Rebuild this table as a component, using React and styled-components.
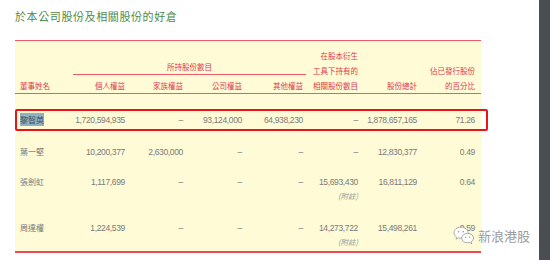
import React from "react";
import styled, { createGlobalStyle, css } from "styled-components";

const COLS = "45px 60px 58px 59px 61px 55px 59px 58px";
const CJK = `"Noto Sans CJK TC", "Noto Sans CJK SC", sans-serif`;
const NUM = `"Liberation Sans", Arial, sans-serif`;

const rows = [
  { name: "黎智英", marked: true, values: ["1,720,594,935", "–", "93,124,000", "64,938,230", "–", "1,878,657,165", "71.26"] },
  { name: "葉一堅", top: 14, values: ["10,200,377", "2,630,000", "–", "–", "–", "12,830,377", "0.49"] },
  { name: "張劍虹", top: 16, note: true, values: ["1,117,699", "–", "–", "–", "15,693,430", "16,811,129", "0.64"] },
  { name: "周達權", top: 18, note: true, values: ["1,224,539", "–", "–", "–", "14,273,722", "15,498,261", "0.59"] },
];

function WeChatIcon() {
  return (
    <svg width="22" height="19" viewBox="0 0 22 19">
      <path
        d="M8 1.2C3.9 1.2 1 3.8 1 6.8c0 1.8 1 3.3 2.5 4.3L3 13.2l2.5-1.3c.8.2 1.6.4 2.5.4 4.1 0 7-2.5 7-5.5S12.1 1.2 8 1.2z"
        fill="#fff"
        stroke="#a8a8a8"
        strokeWidth="1"
      />
      <circle cx="5.6" cy="5.6" r="0.9" fill="#a8a8a8" />
      <circle cx="10.2" cy="5.6" r="0.9" fill="#a8a8a8" />
      <path
        d="M14.6 7.4c-3.4 0-5.9 2.1-5.9 4.7s2.5 4.7 5.9 4.7c.7 0 1.4-.1 2-.3l2.1 1.1-.5-1.8c1.4-.9 2.3-2.2 2.3-3.7 0-2.6-2.5-4.7-5.9-4.7z"
        fill="#fff"
        stroke="#a8a8a8"
        strokeWidth="1"
      />
      <circle cx="12.6" cy="11.2" r="0.8" fill="#a8a8a8" />
      <circle cx="16.6" cy="11.2" r="0.8" fill="#a8a8a8" />
    </svg>
  );
}

export default function App() {
  return (
    <Page>
      <GlobalStyle />
      <Content>
        <Title>於本公司股份及相關股份的好倉</Title>
        <Panel>
          <HeadGrid>
            <HeadCell $col="1" $row="3" $left>董事姓名</HeadCell>
            <GroupCell>所持股份數目</GroupCell>
            <HeadCell $col="2" $row="3">個人權益</HeadCell>
            <HeadCell $col="3" $row="3">家族權益</HeadCell>
            <HeadCell $col="4" $row="3">公司權益</HeadCell>
            <HeadCell $col="5" $row="3">其他權益</HeadCell>
            <HeadCell $col="6" $row="1 / 4">
              在股本衍生
              <br />
              工具下持有的
              <br />
              相關股份數目
            </HeadCell>
            <HeadCell $col="7" $row="3">股份總計</HeadCell>
            <HeadCell $col="8" $row="2 / 4">
              佔已發行股份
              <br />
              的百分比
            </HeadCell>
          </HeadGrid>

          <Body>
            {rows.map((r) => (
              <Row key={r.name} $marked={r.marked} $top={r.top || 0}>
                <Name>{r.marked ? <Selected>{r.name}</Selected> : r.name}</Name>
                {r.values.map((v, i) => (
                  <Num key={i}>
                    {v}
                    {r.note && i === 4 && <Note>(附註)</Note>}
                  </Num>
                ))}
              </Row>
            ))}
          </Body>
        </Panel>

        <Watermark>
          <WeChatIcon />
          <span>新浪港股</span>
        </Watermark>
      </Content>
      <Sidebar />
    </Page>
  );
}

const GlobalStyle = createGlobalStyle`
  html, body {
    margin: 0;
    padding: 0;
    background: #fff;
  }
  body {
    font-family: ${CJK};
  }
`;

const Page = styled.div`
  display: flex;
  width: 550px;
  height: 260px;
  overflow: hidden;
`;

const Content = styled.div`
  position: relative;
  flex: 1;
  padding-left: 15px;
`;

const Sidebar = styled.div`
  width: 11px;
  background: #4a4d51;
`;

const Title = styled.div`
  padding-top: 9px;
  height: 14px;
  line-height: 14px;
  font-size: 11px;
  letter-spacing: 0.6px;
  color: #4e8a45;
`;

const Panel = styled.div`
  margin-top: 17px;
  width: 466px;
  background: #fffbd6;
  border-top: 1.5px solid #ee5a6a;
  border-bottom: 2px solid #ee4a5c;
`;

const HeadGrid = styled.div`
  display: grid;
  grid-template-columns: ${COLS};
  grid-template-rows: repeat(3, 15px);
  padding: 7px 6px 0 5px;
  border-bottom: 1.5px solid #ee5a6a;
  color: #d93a4e;
  font-size: 7.5px;
  line-height: 15px;
`;

const HeadCell = styled.div`
  grid-column: ${(p) => p.$col};
  grid-row: ${(p) => p.$row};
  text-align: ${(p) => (p.$left ? "left" : "right")};
  align-self: end;
  white-space: nowrap;
`;

const GroupCell = styled.div`
  grid-column: 2 / 6;
  grid-row: 1 / 3;
  align-self: end;
  margin: 0 -3px 3px 8px;
  border-bottom: 1.5px solid #ee5a6a;
  text-align: center;
  line-height: 14px;
`;

const Body = styled.div`
  padding: 14.5px 0 2px;
`;

const Row = styled.div`
  display: grid;
  grid-template-columns: ${COLS};
  padding: ${(p) => p.$top}px 6px 0 5px;
  line-height: 14px;
  color: #7a7a7a;
  ${(p) =>
    p.$marked &&
    css`
      margin-right: -7px;
      padding: 0 11px 0 3px;
      border: 2px solid #e8141c;
      border-radius: 2px;
      line-height: 18px;
    `}
`;

const Name = styled.div`
  font-family: ${CJK};
  font-size: 8px;
  white-space: nowrap;
`;

const Selected = styled.span`
  background: #8fb1c2;
  color: #3e4f5a;
  padding: 1px 0;
`;

const Num = styled.div`
  font-family: ${NUM};
  font-size: 8.5px;
  letter-spacing: -0.35px;
  text-align: right;
  white-space: nowrap;
`;

const Note = styled.div`
  font-family: ${CJK};
  font-size: 7.5px;
  font-style: italic;
  letter-spacing: 0;
  color: #9a9a9a;
  line-height: 14px;
`;

const Watermark = styled.div`
  position: absolute;
  right: 9px;
  top: 226px;
  display: flex;
  align-items: center;
  gap: 3px;
  font-size: 13px;
  line-height: 18px;
  color: #9c9c9c;
  text-shadow: 0 0 2px #fff;
`;
